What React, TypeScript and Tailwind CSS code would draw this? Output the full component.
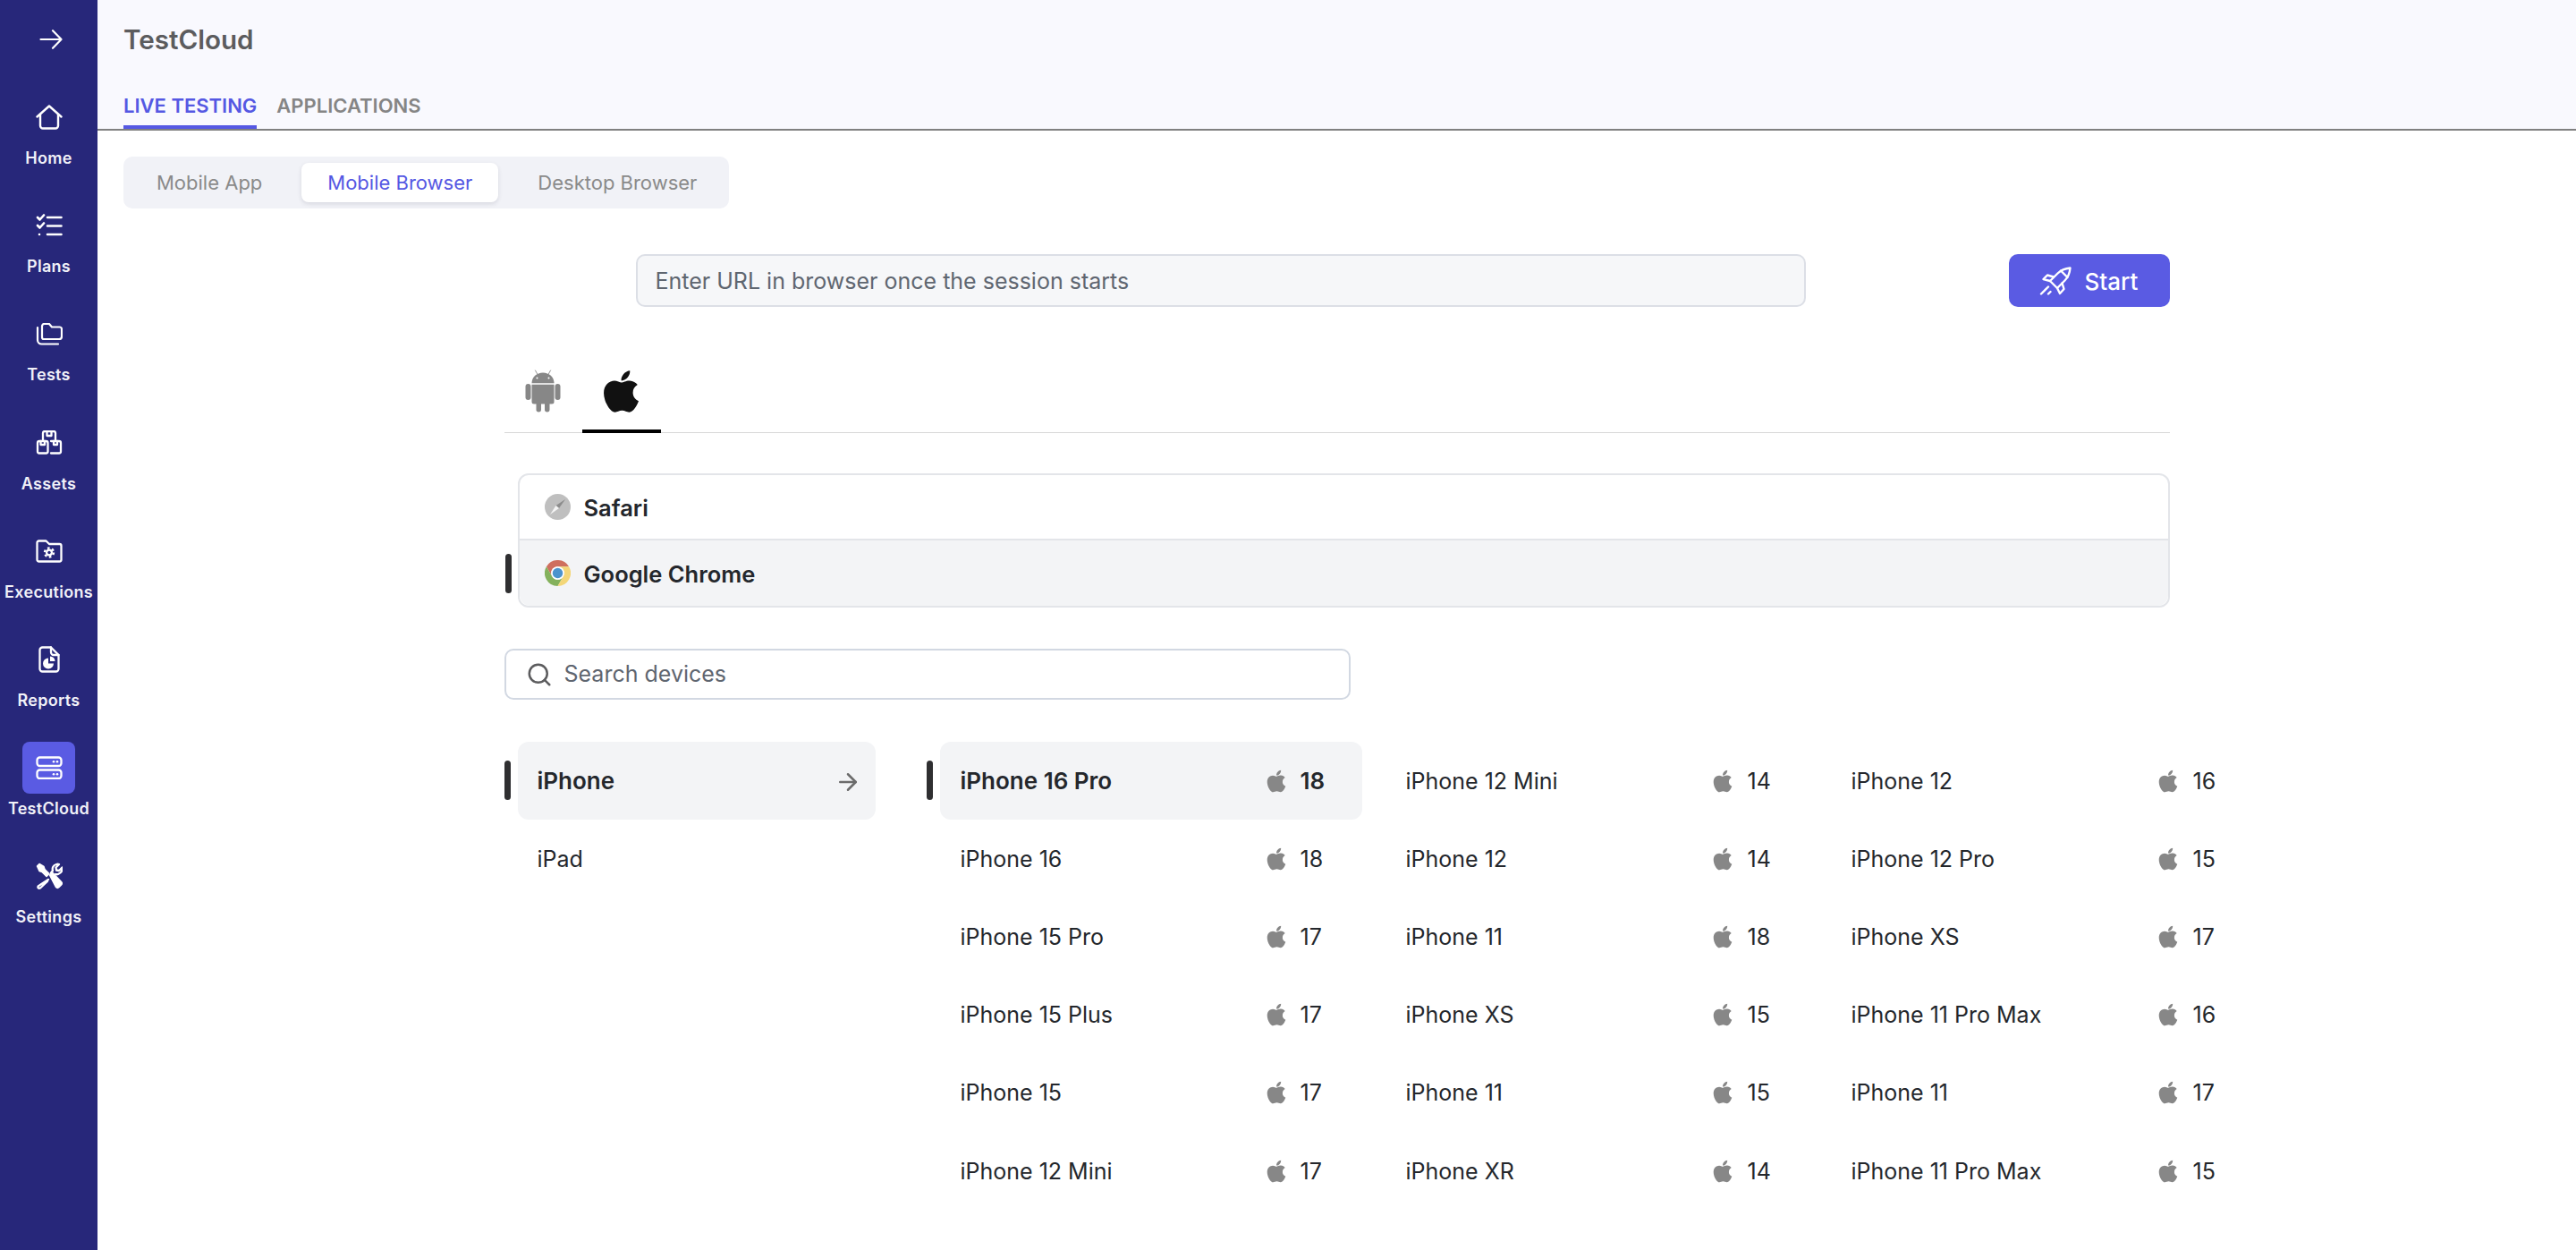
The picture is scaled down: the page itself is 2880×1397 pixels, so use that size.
import { ArrowRight, Search } from "lucide-react"
import { FaApple } from "react-icons/fa"
import type { ReactNode } from "react"

function HomeIcon() {
  return (
    <svg width="30" height="28" viewBox="0 0 30 28" fill="none" stroke="currentColor" strokeWidth="2.4" strokeLinecap="round" strokeLinejoin="round">
      <path d="M1.5 13.5 15 1.5l13.5 12" />
      <path d="M5 11v12.5A3 3 0 0 0 8 26.500h14a3 3 0 0 0 3-3V11" />
    </svg>
  )
}

function PlansIcon() {
  return (
    <svg width="30" height="26" viewBox="0 0 30 26" fill="none" stroke="currentColor" strokeWidth="2.6" strokeLinecap="round" strokeLinejoin="round">
      <path d="M2 4l2.500 2.500L9 1.500" />
      <path d="M2 13l2.500 2.500L9 10.500" />
      <path d="M13 4h15.500M13 13.500h15.500M13 23h15.500" />
      <circle cx="4" cy="23" r="1.300" fill="currentColor" stroke="none" />
    </svg>
  )
}

function TestsIcon() {
  return (
    <svg width="30" height="25" viewBox="0 0 30 25" fill="none" stroke="currentColor" strokeWidth="2.200" strokeLinecap="round" strokeLinejoin="round">
      <path d="M7 16V3.500A2.500 2.500 0 0 1 9.500 1h5.500l3 3.500h8.500A2.500 2.500 0 0 1 29 7v8a3 3 0 0 1-3 3H9a2 2 0 0 1-2-2Z" />
      <path d="M2 5v14a4.500 4.500 0 0 0 4.500 4.500H25" />
    </svg>
  )
}

function AssetsIcon() {
  return (
    <svg width="30" height="27" viewBox="0 0 30 27" fill="none" stroke="currentColor" strokeWidth="2.300" strokeLinecap="round" strokeLinejoin="round">
      <path d="M8 11V3a2 2 0 0 1 2-2h10a2 2 0 0 1 2 2v8" />
      <path d="M12.500 1.500v4.500h5V1.500" />
      <rect x="2" y="12" width="11.500" height="13.500" rx="2" />
      <path d="M5.500 12v4h4.500v-4" />
      <path d="M17 25.500h9a2 2 0 0 0 2-2V14a2 2 0 0 0-2-2h-9" />
      <path d="M20 12v4h4v-4" />
    </svg>
  )
}

function ExecutionsIcon() {
  return (
    <svg width="30" height="26" viewBox="0 0 30 26" fill="none" stroke="currentColor" strokeWidth="2.300" strokeLinecap="round" strokeLinejoin="round">
      <path d="M1.500 3.500A2 2 0 0 1 3.500 1.500h8l3.500 3.500h11.500a2 2 0 0 1 2 2v15.500a2 2 0 0 1-2 2h-23a2 2 0 0 1-2-2Z" />
      <circle cx="15" cy="14.500" r="5" stroke="currentColor" strokeWidth="2.400" strokeLinecap="butt" strokeDasharray="2.600 2.630" />
      <circle cx="15" cy="14.500" r="4" fill="currentColor" stroke="none" />
      <circle cx="15" cy="14.500" r="1.700" fill="#27277a" stroke="none" />
    </svg>
  )
}

function ReportsIcon() {
  return (
    <svg width="24" height="30" viewBox="0 0 24 30" fill="none" stroke="currentColor" strokeWidth="2.300" strokeLinecap="round" strokeLinejoin="round">
      <path d="M14 1.500H4.500a3 3 0 0 0-3 3v21a3 3 0 0 0 3 3h15a3 3 0 0 0 3-3V10Z" />
      <path d="M14 1.500V7a3 3 0 0 0 3 3h5.500" />
      <path d="M11 13.500a6 6 0 1 0 6 6h-6Z" fill="currentColor" stroke="none" />
      <path d="M13 11.500a5.500 5.500 0 0 1 5.500 5.500H13Z" fill="currentColor" stroke="none" />
    </svg>
  )
}

function ServerIcon() {
  return (
    <svg width="30" height="26" viewBox="0 0 30 26" fill="none" stroke="currentColor" strokeWidth="2.300">
      <rect x="1.500" y="1.500" width="27" height="9.500" rx="3" />
      <rect x="1.500" y="15.500" width="27" height="9.500" rx="3" />
      <g fill="currentColor" stroke="none">
        <circle cx="20" cy="6.200" r="1.300" />
        <circle cx="24" cy="6.200" r="1.300" />
        <circle cx="20" cy="20.200" r="1.300" />
        <circle cx="24" cy="20.200" r="1.300" />
      </g>
    </svg>
  )
}

function ToolsIcon() {
  return (
    <svg width="30" height="30" viewBox="0 0 30 30" fill="none" stroke="currentColor" strokeLinecap="round" strokeLinejoin="round">
      <path d="M1.500 4 4 1.500l5 3 1 3 5 5-3 3-5-5-3-1Z" fill="currentColor" strokeWidth="1.500" />
      <path d="m15.500 14 3-3 10 10.500a2.500 2.500 0 0 1 0 3.500l-2.500 2.500a2.500 2.500 0 0 1-3.500 0Z" fill="currentColor" strokeWidth="1.500" />
      <path d="M14 19 4 25.500a2 2 0 0 0-1.500 2.500 2 2 0 0 0 2.500 0.500L13 21" strokeWidth="2.300" />
      <path d="M17 11.500 19 9c-1-3 0.500-6 4-7 1-0.300 2-0.300 3 0l-3.500 3.500 0.500 3 3 0.500 3.500-3.500c0.500 3-1 6-4.500 7.500-1 0.300-2 0.300-3 0" strokeWidth="2.300" />
    </svg>
  )
}

function RocketIcon() {
  return (
    <svg width="36" height="32" viewBox="0 0 36 32" fill="none" stroke="currentColor" strokeWidth="2.400" strokeLinecap="round" strokeLinejoin="round">
      <path d="M34.500 1.500C29 2 24 4 20.500 7.500L12 16l8 8 8.500-8.500C32 12 34 7 34.500 1.500Z" />
      <path d="M24 4.500 31.500 12" />
      <path d="M16 11.500 9 9.500 4.500 14l7.500 2" />
      <path d="m25.500 18.500 2 6.500-4.500 5-3-6" />
      <path d="M2 30.500 10 22.500M10 30.500l2.500-2.500" />
    </svg>
  )
}

function AndroidIcon() {
  return (
    <svg width="40" height="48" viewBox="0 0 40 48" fill="currentColor">
      <path d="M7.500 15.200C7.500 8.500 13 3.500 20 3.500s12.500 5 12.500 11.700Z" />
      <path d="M7.500 16.800h25V36a2.500 2.500 0 0 1-2.500 2.500H10A2.500 2.500 0 0 1 7.500 36Z" />
      <rect x="0.500" y="16" width="6" height="18" rx="3" />
      <rect x="33.500" y="16" width="6" height="18" rx="3" />
      <rect x="12.500" y="34" width="5.500" height="13.500" rx="2.700" />
      <rect x="22" y="34" width="5.500" height="13.500" rx="2.700" />
      <path d="M11.500 1 14 5.500M28.500 1 26 5.500" fill="none" stroke="currentColor" strokeWidth="0.900" strokeLinecap="round" />
      <circle cx="13.500" cy="9.500" r="1" fill="#fff" />
      <circle cx="26.500" cy="9.500" r="1" fill="#fff" />
    </svg>
  )
}

function SidebarArrow() {
  return (
    <svg width="26" height="22" viewBox="0 0 26 22" fill="none" stroke="currentColor" strokeWidth="2.200" strokeLinecap="round" strokeLinejoin="round">
      <path d="M1.500 11h23M15 1.200 24.500 11 15 20.800" />
    </svg>
  )
}

function SafariIcon() {
  return (
    <svg width="29" height="29" viewBox="0 0 29 29">
      <circle cx="14.500" cy="14.500" r="14.500" fill="#bfbfbf" />
      <path d="M23 6 16 16l-3.500-3Z" fill="#8c8c8c" />
      <path d="M6 23 12.500 13l3.500 3Z" fill="#f4f4f4" />
    </svg>
  )
}

function ChromeIcon() {
  return (
    <svg width="29" height="29" viewBox="0 0 48 48">
      <path d="M24 12H44.800A24 24 0 0 0 3.200 12L13.600 30A12 12 0 0 1 24 12Z" fill="#cf6f5e" />
      <path d="M13.600 30 3.200 12A24 24 0 0 0 24 48L34.400 30A12 12 0 0 1 13.600 30Z" fill="#84b15c" />
      <path d="M34.400 30 24 48A24 24 0 0 0 44.800 12H24A12 12 0 0 1 34.400 30Z" fill="#f3d677" />
      <circle cx="24" cy="24" r="12" fill="#fff" />
      <circle cx="24" cy="24" r="9.500" fill="#4b93cd" />
    </svg>
  )
}

const navItems: { label: string; icon: ReactNode; active?: boolean }[] = [
  { label: "Home", icon: <HomeIcon /> },
  { label: "Plans", icon: <PlansIcon /> },
  { label: "Tests", icon: <TestsIcon /> },
  { label: "Assets", icon: <AssetsIcon /> },
  { label: "Executions", icon: <ExecutionsIcon /> },
  { label: "Reports", icon: <ReportsIcon /> },
  { label: "TestCloud", icon: <ServerIcon />, active: true },
  { label: "Settings", icon: <ToolsIcon /> },
]

const deviceColumns = [
  [
    ["iPhone 16 Pro", "18"],
    ["iPhone 16", "18"],
    ["iPhone 15 Pro", "17"],
    ["iPhone 15 Plus", "17"],
    ["iPhone 15", "17"],
    ["iPhone 12 Mini", "17"],
  ],
  [
    ["iPhone 12 Mini", "14"],
    ["iPhone 12", "14"],
    ["iPhone 11", "18"],
    ["iPhone XS", "15"],
    ["iPhone 11", "15"],
    ["iPhone XR", "14"],
  ],
  [
    ["iPhone 12", "16"],
    ["iPhone 12 Pro", "15"],
    ["iPhone XS", "17"],
    ["iPhone 11 Pro Max", "16"],
    ["iPhone 11", "17"],
    ["iPhone 11 Pro Max", "15"],
  ],
]

function Marker() {
  return <span className="absolute -left-[15px] top-[21px] h-[44px] w-[7px] rounded-full bg-[#2f2f31]" />
}

function Sidebar() {
  return (
    <aside className="flex w-[109px] shrink-0 flex-col items-center bg-[#27277a] text-white">
      <div className="flex h-[102px] w-full justify-center pt-[33px] pl-[5px]">
        <SidebarArrow />
      </div>
      {navItems.map((item) => (
        <div key={item.label} className="flex h-[121.2px] w-full flex-col items-center">
          <div className={`flex h-[58px] w-[59px] items-center justify-center rounded-lg ${item.active ? "bg-[#5a5be3]" : ""}`}>
            {item.icon}
          </div>
          <span className="mt-[4px] text-[18px] leading-[26px] font-semibold tracking-[0.3px] whitespace-nowrap text-[#f1f1f8]">
            {item.label}
          </span>
        </div>
      ))}
    </aside>
  )
}

export default function App() {
  return (
    <div className="flex h-[1397px] w-[2880px] overflow-hidden bg-white font-[Inter,sans-serif] text-[25px] text-[#24272c]">
      <Sidebar />
      <main className="min-w-0 flex-1">
        <header className="h-[146px] border-b-2 border-[#808080] bg-[#f9f9fe] pl-[29px]">
          <h1 className="pt-[22px] text-[29.600px] leading-[44px] font-semibold text-[#5c5c5e]">TestCloud</h1>
          <div className="mt-[30px] flex h-[48px] gap-[22px] text-[22px] font-semibold">
            <span className="h-[48px] border-b-4 border-[#5558e3] pt-[8px] leading-[28px] text-[#5558e3]">LIVE TESTING</span>
            <span className="pt-[8px] leading-[28px] text-[#858585]">APPLICATIONS</span>
          </div>
        </header>

        <div className="pl-[29px]">
          <div className="mt-[29px] inline-flex h-[58px] items-center rounded-[10px] bg-[#f1f2f7] px-[7px] text-[22px] text-[#8a8a8a]">
            <span className="pr-[44px] pl-[30px]">Mobile App</span>
            <span className="flex h-[44px] w-[220px] items-center justify-center rounded-lg bg-white text-[#5558e3] shadow-[0_2px_5px_rgba(30,30,60,0.12)]">
              Mobile Browser
            </span>
            <span className="pr-[29px] pl-[44px]">Desktop Browser</span>
          </div>
        </div>

        <div className="mx-auto w-[1862px]">
          <div className="mt-[51px] flex justify-between pl-[147px]">
            <div className="flex h-[59px] w-[1308px] items-center rounded-[10px] border-2 border-[#dcdfe6] bg-[#f6f7f9] px-[20px] pt-[3px] text-[#5f6670]">
              Enter URL in browser once the session starts
            </div>
            <button className="flex h-[59px] w-[180px] items-center gap-[15px] rounded-[10px] bg-[#5a5be3] pl-[34px] text-[26px] font-medium text-white">
              <RocketIcon />
              <span className="pt-[2px]">Start</span>
            </button>
          </div>

          <div className="mt-[57px] flex h-[84px] border-b border-[#d8d8d8]">
            <div className="flex h-[84px] w-[87px] justify-center pt-[13px] text-[#878787]">
              <AndroidIcon />
            </div>
            <div className="flex h-[84px] w-[88px] justify-center border-b-4 border-black pt-[11px] text-[#111111]">
              <FaApple size={53} />
            </div>
          </div>

          <div className="relative mt-[45px] ml-[15px] rounded-xl border-2 border-[#e3e5e9] text-[25.500px] font-semibold">
            <div className="flex h-[73px] items-center gap-[15px] border-b-2 border-[#e3e5e9] pl-[28px]">
              <SafariIcon />
              <span className="pt-[4px]">Safari</span>
            </div>
            <div className="flex h-[73px] items-center gap-[15px] rounded-b-xl bg-[#f3f4f6] pl-[28px]">
              <ChromeIcon />
              <span className="pt-[4px]">Google Chrome</span>
            </div>
            <span className="absolute -left-[16px] top-[88px] h-[44px] w-[7px] rounded-full bg-[#2f2f31]" />
          </div>

          <div className="mt-[46px] flex h-[57px] w-[946px] items-center gap-[13px] rounded-[10px] border-2 border-[#d2d8e2] pl-[22px] text-[#5f6670]">
            <Search size={30} strokeWidth={2} className="text-[#5c5c5e]" />
            Search devices
          </div>

          <div className="mt-[47px] ml-[15px] flex leading-[34px]">
            <div className="w-[400px] shrink-0">
              <div className="relative flex h-[87.200px] items-center justify-between rounded-xl bg-[#f3f4f6] pr-[16px] pl-[22px] text-[26px] font-semibold">
                <Marker />
                iPhone
                <ArrowRight size={30} strokeWidth={2} className="mt-[2px] text-[#6b6b6b]" />
              </div>
              <div className="flex h-[87.200px] items-center pl-[22px]">iPad</div>
            </div>

            <div className="ml-[72px] flex shrink-0 gap-[26px]">
              {deviceColumns.map((column, c) => (
                <div key={c} className="w-[472px]">
                  {column.map(([name, version], r) => {
                    const selected = c === 0 && r === 0
                    return (
                      <div
                        key={r}
                        className={`relative flex h-[87.200px] items-center justify-between pl-[23px] ${c === 0 ? "pr-[41px]" : "pr-[39px]"} ${
                          selected ? "rounded-xl bg-[#f3f4f6] text-[26px] font-semibold" : ""
                        }`}
                      >
                        {selected && <Marker />}
                        {name}
                        <span className={`flex items-center ${c === 0 ? "gap-[13px]" : "gap-[14px]"}`}>
                          <FaApple size={28} className="text-[#878787]" />
                          <span className="w-[28px]">{version}</span>
                        </span>
                      </div>
                    )
                  })}
                </div>
              ))}
            </div>
          </div>
        </div>
      </main>
    </div>
  )
}
